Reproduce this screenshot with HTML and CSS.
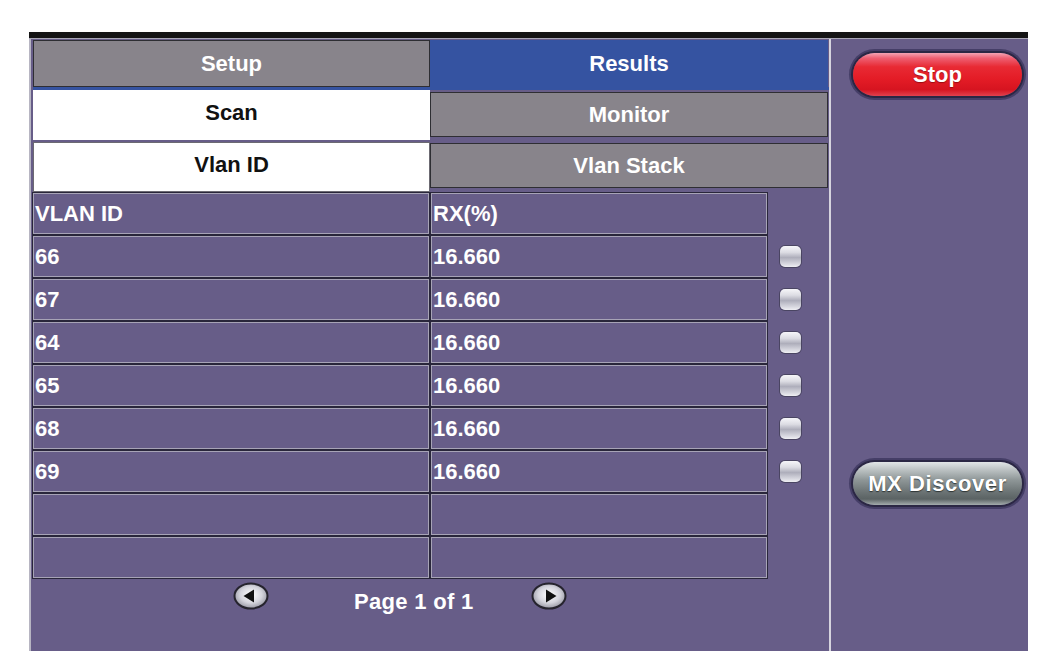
FILE: index.html
```html
<!DOCTYPE html>
<html>
<head>
<meta charset="utf-8">
<title>VLAN Scan Results</title>
<link rel="stylesheet" href="styles.css">
</head>
<body>
<div class="device">
  <div class="topbar"></div>
  <div class="body">
    <div class="main">
      <div class="tabrow tabrow-top">
        <div class="tab tab-gray">Setup</div>
        <div class="tab tab-blue">Results</div>
      </div>
      <div class="tabrow">
        <div class="tab tab-white">Scan</div>
        <div class="tab tab-gray tab-r2">Monitor</div>
      </div>
      <div class="tabrow tabrow-3">
        <div class="tab tab-white tab-boxed">Vlan ID</div>
        <div class="tab tab-gray tab-r3">Vlan Stack</div>
      </div>

      <div class="table">
        <div class="trow"><div class="cell">VLAN ID</div><div class="cell">RX(%)</div><div class="chk"></div></div>
        <div class="trow"><div class="cell">66</div><div class="cell">16.660</div><div class="chk"><span class="box"></span></div></div>
        <div class="trow"><div class="cell">67</div><div class="cell">16.660</div><div class="chk"><span class="box"></span></div></div>
        <div class="trow"><div class="cell">64</div><div class="cell">16.660</div><div class="chk"><span class="box"></span></div></div>
        <div class="trow"><div class="cell">65</div><div class="cell">16.660</div><div class="chk"><span class="box"></span></div></div>
        <div class="trow"><div class="cell">68</div><div class="cell">16.660</div><div class="chk"><span class="box"></span></div></div>
        <div class="trow"><div class="cell">69</div><div class="cell">16.660</div><div class="chk"><span class="box"></span></div></div>
        <div class="trow"><div class="cell"></div><div class="cell"></div><div class="chk"></div></div>
        <div class="trow"><div class="cell"></div><div class="cell"></div><div class="chk"></div></div>
      </div>

      <div class="pager">
        <svg class="arrow arrow-prev" viewBox="0 0 36 28" width="36" height="28">
          <defs>
            <radialGradient id="agl" cx="0.5" cy="0.45" r="0.6">
              <stop offset="0" stop-color="#ffffff"/>
              <stop offset="0.55" stop-color="#d4d4dc"/>
              <stop offset="1" stop-color="#8a8a96"/>
            </radialGradient>
          </defs>
          <ellipse cx="18" cy="14" rx="16.5" ry="12.5" fill="url(#agl)" stroke="#26242e" stroke-width="2"/>
          <path d="M10.5 14 L21 7.5 L21 20.5 Z" fill="#101010"/>
        </svg>
        <span class="page-label">Page 1 of 1</span>
        <svg class="arrow arrow-next" viewBox="0 0 36 28" width="36" height="28">
          <defs>
            <radialGradient id="agr" cx="0.5" cy="0.45" r="0.6">
              <stop offset="0" stop-color="#ffffff"/>
              <stop offset="0.55" stop-color="#d4d4dc"/>
              <stop offset="1" stop-color="#8a8a96"/>
            </radialGradient>
          </defs>
          <ellipse cx="18" cy="14" rx="16.5" ry="12.5" fill="url(#agr)" stroke="#26242e" stroke-width="2"/>
          <path d="M25.5 14 L15 7.5 L15 20.5 Z" fill="#101010"/>
        </svg>
      </div>
    </div>

    <div class="side">
      <button class="pill pill-red">Stop</button>
      <button class="pill pill-gray">MX Discover</button>
    </div>
  </div>
</div>
</body>
</html>
```

FILE: styles.css
```css
* { box-sizing: border-box; }

html, body {
  margin: 0;
  padding: 0;
  background: #ffffff;
}

body {
  font-family: "Liberation Sans", Arial, sans-serif;
  font-weight: bold;
  font-size: 22px;
}

.device {
  margin: 32px 0 0 29px;
  width: 999px;
  height: 619px;
  background: #675d88;
  display: flex;
  flex-direction: column;
}

.topbar {
  flex: none;
  height: 6px;
  background: #141414;
}

.body {
  flex: 1;
  display: flex;
  border-top: 1px solid #a9a6b6;
}

.main {
  width: 800px;
  border-left: 2px solid #b7b5c2;
  padding: 1px 0 0 2px;
  display: flex;
  flex-direction: column;
}

.side {
  flex: 1;
  border-left: 2px solid #d6d4de;
  padding: 14px 0 0 22px;
  display: flex;
  flex-direction: column;
  align-items: flex-start;
}

/* ---------- tabs ---------- */
.tabrow {
  display: grid;
  grid-template-columns: 397px 398px;
  height: 50px;
}

.tabrow-top {
  border-bottom: 3px solid #3553a1;
}

.tabrow-3 {
  margin-top: 2px;
}

.tab {
  display: flex;
  align-items: center;
  justify-content: center;
  color: #ffffff;
  line-height: 1;
}

.tab-gray {
  background: #88848b;
  border: 1px solid #2e2e33;
}

.tab-blue {
  background: #3553a1;
}

.tab-white {
  background: #ffffff;
  color: #111111;
  padding-bottom: 4px;
}

.tab-boxed {
  border: 1px solid #6c6a72;
}

.tab-r2 {
  margin: 2px 0 3px;
}

.tab-r3 {
  margin: 1px 0 4px;
}

/* ---------- table ---------- */
.table {
  margin-top: 1px;
  display: flex;
  flex-direction: column;
  gap: 2px;
}

.trow {
  display: grid;
  grid-template-columns: 396px 336px 1fr;
  column-gap: 2px;
  height: 41px;
}

.cell {
  border: 1px solid #a7a3b6;
  outline: 1px solid #29263a;
  display: flex;
  align-items: center;
  padding-left: 1px;
  color: #ffffff;
  white-space: nowrap;
}

.chk {
  display: flex;
  align-items: center;
  padding-left: 11px;
}

.box {
  display: block;
  width: 21px;
  height: 21px;
  border-radius: 5px;
  background: linear-gradient(#f6f6f9 0%, #dcdce3 30%, #aeaebb 55%, #d8d8e0 85%, #efeff3 100%);
  box-shadow: 0 0 0 1px #4a4562;
}

/* ---------- pager ---------- */
.pager {
  display: flex;
  align-items: flex-start;
  padding-top: 4px;
}

.arrow {
  flex: none;
  display: block;
}

.arrow-prev {
  margin-left: 200px;
}

.page-label {
  margin-left: 85px;
  margin-top: 7px;
  color: #ffffff;
  letter-spacing: 0.3px;
  line-height: 25px;
}

.arrow-next {
  margin-left: 58px;
}

/* ---------- side buttons ---------- */
.pill {
  width: 169px;
  height: 43px;
  border: none;
  border-radius: 22px;
  font: inherit;
  color: #ffffff;
  padding: 0;
  line-height: 1;
  box-shadow: 0 0 0 2px #2b2744, 0 0 0 4px rgba(58, 52, 92, 0.75);
  cursor: pointer;
}

.pill-red {
  background: linear-gradient(#f4a4b4 0%, #ee5f72 12%, #e82a34 32%, #e41c26 60%, #d61420 85%, #e2414e 100%);
  text-shadow: 0 1px 1px rgba(90, 0, 0, 0.5);
}

.pill-gray {
  margin-top: 366px;
  background: linear-gradient(#e2e6e7 0%, #bcc2c3 18%, #8e9697 42%, #6b7374 70%, #5b6364 86%, #a4acad 100%);
  letter-spacing: 0.6px;
  text-shadow: 0 1px 1px rgba(20, 25, 25, 0.7);
}
```
